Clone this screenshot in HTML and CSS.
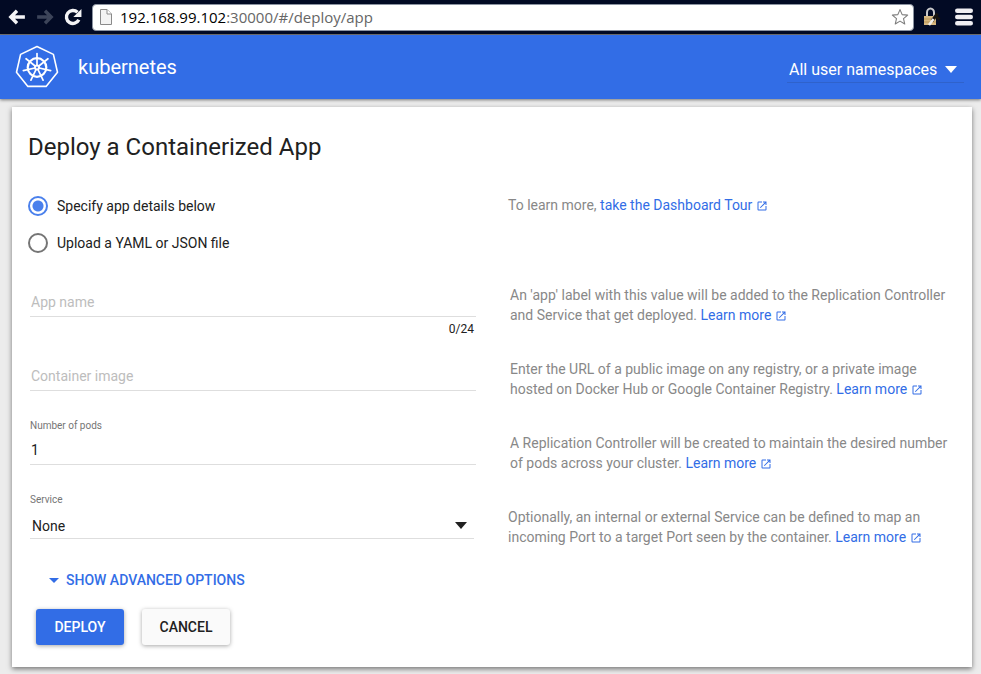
FILE: index.html
```html
<!DOCTYPE html>
<html lang="en">
<head>
<meta charset="utf-8">
<meta name="viewport" content="width=device-width, initial-scale=1">
<title>Kubernetes Dashboard</title>
<link rel="stylesheet" href="styles.css">
</head>
<body>
<svg class="sprite" aria-hidden="true">
  <symbol id="open" viewBox="0 0 24 24"><path fill="currentColor" d="M19 19H5V5h7V3H5a2 2 0 0 0-2 2v14a2 2 0 0 0 2 2h14c1.100 0 2-.9 2-2v-7h-2v7zM14 3v2h3.590l-9.830 9.830 1.410 1.410L19 6.410V10h2V3h-7z"/></symbol>
</svg>

<div class="browser">
  <button class="nav" type="button" aria-label="Back"><svg viewBox="0 0 16 16"><path d="M15 8H3M8 2.500 2.500 8 8 13.500" fill="none" stroke="#f4f4f6" stroke-width="3"/></svg></button>
  <button class="nav" type="button" aria-label="Forward"><svg viewBox="0 0 16 16"><path d="M1 8h12M8 2.500 13.500 8 8 13.500" fill="none" stroke="#3c4459" stroke-width="3"/></svg></button>
  <button class="nav" type="button" aria-label="Reload"><svg viewBox="0 0 16 16"><path d="M13.200 10.500A5.800 5.800 0 1 1 12 3.800" fill="none" stroke="#f4f4f6" stroke-width="3"/><path d="M15.500.8V8H8.300z" fill="#f4f4f6"/></svg></button>
  <div class="omnibox">
    <svg class="page-icon" viewBox="0 0 12 16"><path d="M.5.5h6.500l4.500 4.500v10.500H.5z" fill="#f3f3f3" stroke="#8a8a8a"/><path d="M7 .5V5h4.500" fill="#fff" stroke="#8a8a8a"/></svg>
    <div class="url">192.168.99.102<span class="path">:30000/#/deploy/app</span></div>
    <svg class="star" viewBox="0 0 20 20"><path d="m10 1.800 2.400 5.600 6.100.5-4.600 4 1.400 5.900L10 14.600l-5.300 3.200 1.400-5.900-4.600-4 6.100-.5z" fill="#fff" stroke="#7d7d7d" stroke-width="1.200" stroke-linejoin="round"/></svg>
  </div>
  <svg class="lock" viewBox="0 0 18 20"><path d="M4 9V5.500a3.500 4 0 0 1 7 0V9" fill="none" stroke="#c9c9cb" stroke-width="2"/><rect x="1" y="9" width="12" height="9" fill="#d6b780"/><path d="M1 12h12M1 15h12" stroke="#b99457"/><path d="m11.500 8 5 4.500M14.500 6.500 9 14" stroke="#17130f" stroke-width="3"/><path d="m10.500 12-4.500 6" stroke="#f1eee8" stroke-width="2.500"/></svg>
  <button class="nav menu" type="button" aria-label="Menu"><svg viewBox="0 0 16 16"><path d="M2 2.500h12M2 8h12M2 13.500h12" stroke="#f0eef2" stroke-width="4" stroke-linecap="round"/></svg></button>
</div>

<header class="toolbar">
  <svg class="logo" viewBox="0 0 48 48" fill="none" stroke="#fff">
    <path d="M24 3.500 40.400 11.400 44.500 29.200 33.100 43.400H14.900L3.500 29.200 7.600 11.400z" stroke-width="1.600" stroke-linejoin="round"/>
    <circle cx="24" cy="24.500" r="9.300" stroke-width="2.200"/>
    <g stroke-width="1.700" stroke-linecap="round">
      <path id="spoke" d="M24 24.500v-14"/>
      <use href="#spoke" transform="rotate(51.430 24 24.500)"/>
      <use href="#spoke" transform="rotate(102.860 24 24.500)"/>
      <use href="#spoke" transform="rotate(154.290 24 24.500)"/>
      <use href="#spoke" transform="rotate(205.710 24 24.500)"/>
      <use href="#spoke" transform="rotate(257.140 24 24.500)"/>
      <use href="#spoke" transform="rotate(308.570 24 24.500)"/>
    </g>
    <circle cx="24" cy="24.500" r="3" fill="#fff" stroke="none"/>
    <circle cx="24" cy="24.500" r="1" fill="#326de6" stroke="none"/>
  </svg>
  <div class="brand">kubernetes</div>
  <div class="picker namespace">
    <select aria-label="Namespace"><option>All user namespaces</option></select>
    <svg class="caret" viewBox="0 0 12 8"><path d="M0 0h12L6 7z" fill="currentColor"/></svg>
  </div>
</header>

<main class="card">
  <h1>Deploy a Containerized App</h1>
  <form>
    <div class="row intro">
      <div class="choices">
        <label class="choice"><input type="radio" name="source" checked>Specify app details below</label>
        <label class="choice"><input type="radio" name="source">Upload a YAML or JSON file</label>
      </div>
      <p class="help">To learn more, <a href="#tour">take the Dashboard Tour <svg class="ext"><use href="#open"/></svg></a></p>
    </div>

    <div class="row">
      <div class="field">
        <div class="label"></div>
        <input type="text" placeholder="App name" aria-label="App name" maxlength="24">
        <div class="counter">0/24</div>
      </div>
      <p class="help inset">An 'app' label with this value will be added to the Replication Controller and Service that get deployed. <a href="#app">Learn more <svg class="ext"><use href="#open"/></svg></a></p>
    </div>

    <div class="row">
      <div class="field">
        <div class="label"></div>
        <input type="text" placeholder="Container image" aria-label="Container image">
      </div>
      <p class="help inset">Enter the URL of a public image on any registry, or a private image hosted on Docker Hub or Google Container Registry. <a href="#image">Learn more <svg class="ext"><use href="#open"/></svg></a></p>
    </div>

    <div class="row">
      <div class="field">
        <label class="label" for="pods">Number of pods</label>
        <input type="text" inputmode="numeric" id="pods" value="1">
      </div>
      <p class="help inset">A Replication Controller will be created to maintain the desired number of pods across your cluster. <a href="#pods-help">Learn more <svg class="ext"><use href="#open"/></svg></a></p>
    </div>

    <div class="row">
      <div class="field">
        <label class="label" for="service">Service</label>
        <div class="picker service">
          <select id="service"><option>None</option></select>
          <svg class="caret" viewBox="0 0 12 8"><path d="M0 0h12L6 7z" fill="currentColor"/></svg>
        </div>
      </div>
      <p class="help">Optionally, an internal or external Service can be defined to map an incoming Port to a target Port seen by the container. <a href="#service-help">Learn more <svg class="ext"><use href="#open"/></svg></a></p>
    </div>

    <button class="advanced" type="button"><svg viewBox="0 0 10 6"><path d="M0 0h10L5 5z" fill="currentColor"/></svg>SHOW ADVANCED OPTIONS</button>
    <div class="actions">
      <button class="btn primary" type="submit">DEPLOY</button>
      <button class="btn" type="button">CANCEL</button>
    </div>
  </form>
</main>
</body>
</html>
```
FILE: styles.css
```css
* { box-sizing: border-box; }

body {
  margin: 0;
  background: #ececec;
  color: #212121;
  font: 14px/20px Roboto, sans-serif;
}

svg { display: block; flex: none; }
.sprite { display: none; }
button, input, select { font: inherit; color: inherit; }
button { border: 0; background: none; padding: 0; cursor: pointer; }
p, h1 { margin: 0; }
a { color: #326de6; text-decoration: none; }

/* Browser bar */
.browser {
  display: flex;
  align-items: center;
  height: 35px;
  padding: 0 8px;
  background: #020a24;
  border-bottom: 1px solid #757575;
}
.nav { width: 18px; margin-right: 10px; }
.nav svg { width: 18px; height: 18px; }
.omnibox {
  flex: 1;
  display: flex;
  align-items: center;
  min-width: 0;
  height: 27px;
  padding: 0 4px 0 7px;
  background: #fff;
  border: 1px solid #8b93a1;
  border-radius: 4px;
}
.page-icon { width: 12px; height: 16px; margin-right: 8px; }
.url {
  flex: 1;
  color: #000;
  font: 15px/20px "Open Sans", sans-serif;
}
.path { color: #666; }
.star { width: 18px; height: 18px; }
.lock { width: 18px; height: 20px; margin: 0 14px 0 9px; }
.menu { margin: 0; }

/* Application toolbar */
.toolbar {
  position: relative;
  display: flex;
  align-items: center;
  height: 64px;
  padding: 0 17px 0 13px;
  background: #326de6;
  color: #fff;
  box-shadow: 0 1px 3px rgba(0, 0, 0, .5);
}
.logo { width: 48px; height: 48px; }
.brand { flex: 1; padding-left: 17px; font-size: 20px; line-height: 24px; }

.picker { display: flex; align-items: center; position: relative; }
.picker select {
  appearance: none;
  width: 100%;
  border: 0;
  outline: 0;
  background: transparent;
}
.caret {
  position: absolute;
  width: 12px;
  height: 8px;
  right: 7px;
  pointer-events: none;
}
.namespace { margin-top: 6px; border-bottom: 1px solid #2f62cb; }
.namespace select { height: 24px; padding: 0 26px 0 2px; font-size: 16px; }

/* Form card */
.card {
  margin: 8px 9px 7px 12px;
  padding: 24px 16px 22px;
  background: #fff;
  box-shadow: 0 2px 5px rgba(0, 0, 0, .5);
}
h1 { font-size: 24px; font-weight: 400; line-height: 32px; }

.row {
  display: grid;
  grid-template-columns: 1fr 1fr;
  column-gap: 32px;
  height: 74px;
}
.row.intro { height: 83px; margin-top: 24px; }
.choices { display: flex; flex-direction: column; gap: 17px; padding-top: 9px; }
.choice { display: flex; align-items: center; gap: 9px; height: 20px; }
.choice input {
  appearance: none;
  width: 20px;
  height: 20px;
  margin: 0;
  border: 2px solid #757575;
  border-radius: 50%;
}
.choice input:checked {
  border-color: #4a80ec;
  background: radial-gradient(circle, #4a80ec 5px, transparent 6px);
}

.help { padding-top: 15px; color: #888; }
.help.inset { padding-left: 2px; }
.intro .help { padding-top: 8px; }
.ext { display: inline-block; width: 12px; height: 12px; vertical-align: -2px; }

.field { padding-left: 2px; }
.label {
  display: block;
  height: 16px;
  color: #757575;
  font-size: 10px;
  line-height: 16px;
}
.field input {
  display: block;
  width: 100%;
  height: 31px;
  padding: 2px 1px 0;
  border: 0;
  border-bottom: 1px solid #dedede;
  outline: 0;
  background: transparent;
}
.field input::placeholder { color: #bdbdbd; opacity: 1; }
.counter { padding: 4px 2px 0 0; font-size: 12px; line-height: 16px; text-align: right; }
.service { margin-right: 2px; border-bottom: 1px solid #dedede; }
.service select { height: 30px; padding: 6px 24px 0 2px; }
.service .caret { bottom: 8px; }

.advanced {
  display: flex;
  align-items: center;
  gap: 7px;
  height: 28px;
  margin-left: 21px;
  color: #326de6;
  font-weight: 500;
}
.advanced svg { width: 10px; height: 6px; margin-top: 2px; }
.actions { display: flex; gap: 18px; margin: 15px 0 0 8px; }
.btn {
  height: 36px;
  min-width: 88px;
  padding: 0 17px;
  border-radius: 3px;
  background: #fafafa;
  box-shadow: 0 1px 4px rgba(0, 0, 0, .35);
  font-weight: 500;
}
.primary { background: #326de6; color: #fff; }
```
